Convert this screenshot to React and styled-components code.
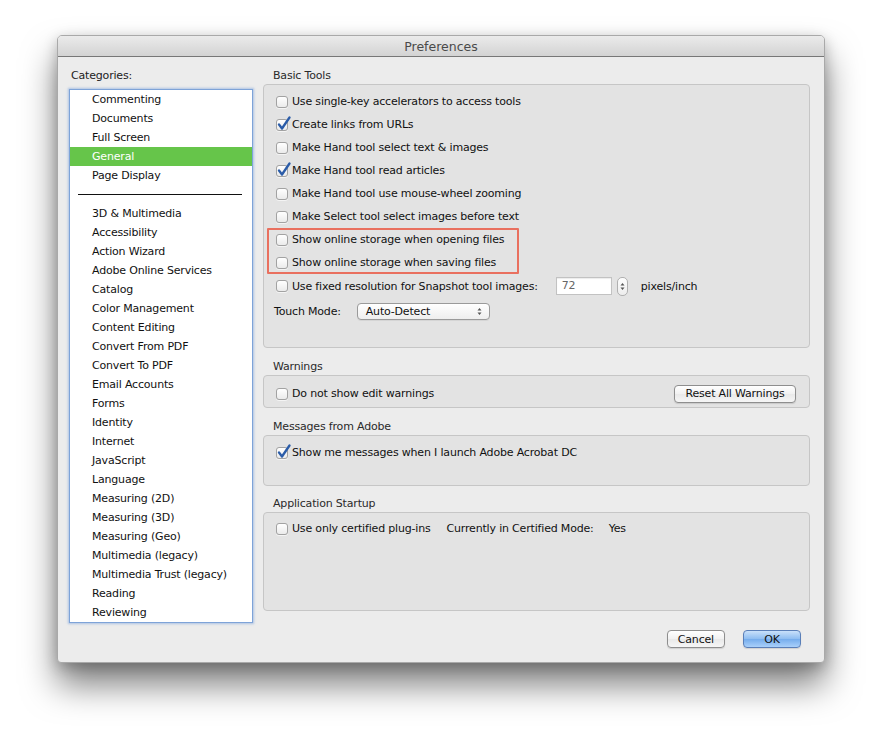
import React from "react"
import styled, { createGlobalStyle } from "styled-components"

const GlobalStyle = createGlobalStyle`
  html, body {
    margin: 0;
    padding: 0;
    background: #ffffff;
  }
  body {
    font-family: "DejaVu Sans", "Liberation Sans", sans-serif;
    font-size: 11px;
    letter-spacing: -0.18px;
    color: #111;
    -webkit-font-smoothing: antialiased;
  }
`

const Page = styled.div`
  padding: 35px 0 0 57px;
  height: 742px;
  box-sizing: border-box;
`

const Window = styled.div`
  width: 768px;
  height: 628px;
  box-sizing: border-box;
  background: #ececec;
  border: 1px solid #a9a9a9;
  border-radius: 5px 5px 4px 4px;
  box-shadow: 0 22px 34px rgba(0, 0, 0, 0.5), 0 4px 14px rgba(0, 0, 0, 0.22);
  display: flex;
  flex-direction: column;
  overflow: hidden;
`

const TitleBar = styled.div`
  height: 20px;
  flex: none;
  border-bottom: 1px solid #777;
  background: linear-gradient(#ebebeb, #d3d3d3);
  display: flex;
  align-items: center;
  justify-content: center;
  font-size: 12.5px;
  letter-spacing: 0;
  color: #4a4a4a;
`

const Body = styled.div`
  flex: 1;
  display: flex;
  gap: 10px;
  padding: 11px 14px 0 11px;
  align-items: flex-start;
`

const Sidebar = styled.div`
  width: 184px;
  flex: none;
  display: flex;
  flex-direction: column;
`

const SideLabel = styled.div`
  height: 16px;
  line-height: 16px;
  padding-left: 2px;
  color: #222;
`

const List = styled.div`
  margin-top: 5px;
  height: 534px;
  box-sizing: border-box;
  background: #fff;
  border: 1px solid #7ea3d8;
  box-shadow: 0 0 2px 1px rgba(120, 160, 220, 0.55);
  overflow: hidden;
`

const Item = styled.div`
  height: 19px;
  line-height: 19px;
  padding-left: 22px;
  white-space: nowrap;
  background: ${(p) => (p.$active ? "#66c54a" : "transparent")};
  color: ${(p) => (p.$active ? "#fff" : "#111")};
`

const Separator = styled.div`
  height: 19px;
  display: flex;
  align-items: center;
  padding: 0 10px 0 8px;

  &::before {
    content: "";
    flex: 1;
    height: 1px;
    background: #111;
  }
`

const Main = styled.div`
  width: 547px;
  flex: none;
  display: flex;
  flex-direction: column;
`

const GroupLabel = styled.div`
  height: 16px;
  line-height: 16px;
  padding-left: 10px;
  margin-top: ${(p) => p.$gap || 0}px;
  color: #2a2a2a;
`

const Group = styled.div`
  height: ${(p) => p.$height}px;
  box-sizing: border-box;
  background: #e3e3e3;
  border: 1px solid #c6c6c6;
  border-radius: 4px;
  padding-top: ${(p) => p.$pad ?? 5}px;
  display: flex;
  flex-direction: column;
`

const Row = styled.div`
  height: ${(p) => p.$h || 23}px;
  display: flex;
  align-items: center;
  padding-left: ${(p) => p.$indent ?? 12}px;
  padding-right: 13px;
  margin-top: ${(p) => p.$mt || 0}px;
  white-space: nowrap;
`

const Highlight = styled.div`
  margin-left: 3px;
  width: 252px;
  box-shadow: inset 0 0 0 2px #e9705f;
  border-radius: 1px;

  ${Row} {
    padding-left: 9px;
  }
`

const Box = styled.span`
  position: relative;
  width: 12px;
  height: 12px;
  flex: none;
  box-sizing: border-box;
  border: 1px solid #a2a2a2;
  border-radius: 3px;
  background: linear-gradient(#ffffff, #ebebeb);
  box-shadow: 0 1px 0 rgba(255, 255, 255, 0.6);
  margin-right: 4px;

  svg {
    position: absolute;
    left: 0;
    top: -4px;
  }
`

const Check = ({ on }) => (
  <Box>
    {on && (
      <svg width="14" height="15" viewBox="0 0 14 15">
        <path
          d="M2 8.5 L5 12.5 L12.5 1.5"
          fill="none"
          stroke="#2b5ca8"
          strokeWidth="2.3"
          strokeLinecap="round"
          strokeLinejoin="round"
        />
      </svg>
    )}
  </Box>
)

const Option = ({ on, children }) => (
  <>
    <Check on={on} />
    <span>{children}</span>
  </>
)

const Field = styled.div`
  width: 56px;
  height: 18px;
  box-sizing: border-box;
  margin-left: 18px;
  background: #fff;
  border: 1px solid #c2c2c2;
  box-shadow: inset 0 1px 1px rgba(0, 0, 0, 0.08);
  color: #666;
  line-height: 16px;
  padding-left: 5px;
`

const Stepper = styled.div`
  width: 11px;
  height: 19px;
  box-sizing: border-box;
  margin-left: 5px;
  border: 1px solid #b0b0b0;
  border-radius: 5px;
  background: linear-gradient(#fdfdfd, #ededed);
  display: flex;
  align-items: center;
  justify-content: center;
`

const Unit = styled.span`
  margin-left: 13px;
`

const SelectBox = styled.div`
  width: 133px;
  height: 17px;
  box-sizing: border-box;
  margin-left: 16px;
  border: 1px solid #9a9a9a;
  border-radius: 4px;
  background: linear-gradient(#ffffff, #eeeeee);
  box-shadow: 0 1px 0 rgba(0, 0, 0, 0.06);
  display: flex;
  align-items: center;
  justify-content: space-between;
  padding: 0 7px 0 8px;
`

const Spacer = styled.div`
  flex: 1;
`

const Button = styled.button`
  height: 18px;
  min-width: ${(p) => p.$w || 58}px;
  box-sizing: border-box;
  padding: 0 10px;
  font-family: inherit;
  font-size: 11px;
  letter-spacing: -0.18px;
  color: #111;
  border-radius: 4px;
  border: 1px solid ${(p) => (p.$primary ? "#5a7fb8" : "#8e8e8e")};
  background: ${(p) =>
    p.$primary
      ? "linear-gradient(#c9e0fa, #8dbcf1 50%, #75acec 51%, #a9d0fa)"
      : "linear-gradient(#ffffff, #f1f1f1 50%, #e9e9e9 51%, #f6f6f6)"};
  box-shadow: 0 1px 1px rgba(0, 0, 0, 0.12);
`

const Footer = styled.div`
  margin-top: 19px;
  display: flex;
  justify-content: flex-end;
  gap: 18px;
  padding-right: 9px;
`

const Text = styled.span`
  margin-left: ${(p) => p.$ml || 0}px;
`

const Arrows = () => (
  <svg width="5" height="9" viewBox="0 0 5 9">
    <path d="M0.5 3.5 L2.5 1 L4.5 3.5 Z M0.5 5.5 L2.5 8 L4.5 5.5 Z" fill="#555" />
  </svg>
)

const categories = [
  "3D & Multimedia",
  "Accessibility",
  "Action Wizard",
  "Adobe Online Services",
  "Catalog",
  "Color Management",
  "Content Editing",
  "Convert From PDF",
  "Convert To PDF",
  "Email Accounts",
  "Forms",
  "Identity",
  "Internet",
  "JavaScript",
  "Language",
  "Measuring (2D)",
  "Measuring (3D)",
  "Measuring (Geo)",
  "Multimedia (legacy)",
  "Multimedia Trust (legacy)",
  "Reading",
  "Reviewing",
]

const top = ["Commenting", "Documents", "Full Screen", "General", "Page Display"]

const App = () => {
  return (
    <Page>
      <GlobalStyle />
      <Window>
        <TitleBar>Preferences</TitleBar>
        <Body>
          <Sidebar>
            <SideLabel>Categories:</SideLabel>
            <List>
              {top.map((c) => (
                <Item key={c} $active={c === "General"}>
                  {c}
                </Item>
              ))}
              <Separator />
              {categories.map((c) => (
                <Item key={c}>{c}</Item>
              ))}
            </List>
          </Sidebar>

          <Main>
            <GroupLabel>Basic Tools</GroupLabel>
            <Group $height={264}>
              <Row>
                <Option>Use single-key accelerators to access tools</Option>
              </Row>
              <Row>
                <Option on>Create links from URLs</Option>
              </Row>
              <Row>
                <Option>Make Hand tool select text &amp; images</Option>
              </Row>
              <Row>
                <Option on>Make Hand tool read articles</Option>
              </Row>
              <Row>
                <Option>Make Hand tool use mouse-wheel zooming</Option>
              </Row>
              <Row>
                <Option>Make Select tool select images before text</Option>
              </Row>
              <Highlight>
                <Row>
                  <Option>Show online storage when opening files</Option>
                </Row>
                <Row>
                  <Option>Show online storage when saving files</Option>
                </Row>
              </Highlight>
              <Row $h={24}>
                <Option>Use fixed resolution for Snapshot tool images:</Option>
                <Field>72</Field>
                <Stepper>
                  <Arrows />
                </Stepper>
                <Unit>pixels/inch</Unit>
              </Row>
              <Row $h={24} $mt={1} $indent={10}>
                <span>Touch Mode:</span>
                <SelectBox>
                  <span>Auto-Detect</span>
                  <Arrows />
                </SelectBox>
              </Row>
            </Group>

            <GroupLabel $gap={11}>Warnings</GroupLabel>
            <Group $height={33} $pad={6}>
              <Row>
                <Option>Do not show edit warnings</Option>
                <Spacer />
                <Button $w={122}>Reset All Warnings</Button>
              </Row>
            </Group>

            <GroupLabel $gap={11}>Messages from Adobe</GroupLabel>
            <Group $height={51}>
              <Row>
                <Option on>Show me messages when I launch Adobe Acrobat DC</Option>
              </Row>
            </Group>

            <GroupLabel $gap={10}>Application Startup</GroupLabel>
            <Group $height={99} $pad={4}>
              <Row>
                <Option>Use only certified plug-ins</Option>
                <Text $ml={16}>Currently in Certified Mode:</Text>
                <Text $ml={15}>Yes</Text>
              </Row>
            </Group>

            <Footer>
              <Button>Cancel</Button>
              <Button $primary>OK</Button>
            </Footer>
          </Main>
        </Body>
      </Window>
    </Page>
  )
}

export default App
